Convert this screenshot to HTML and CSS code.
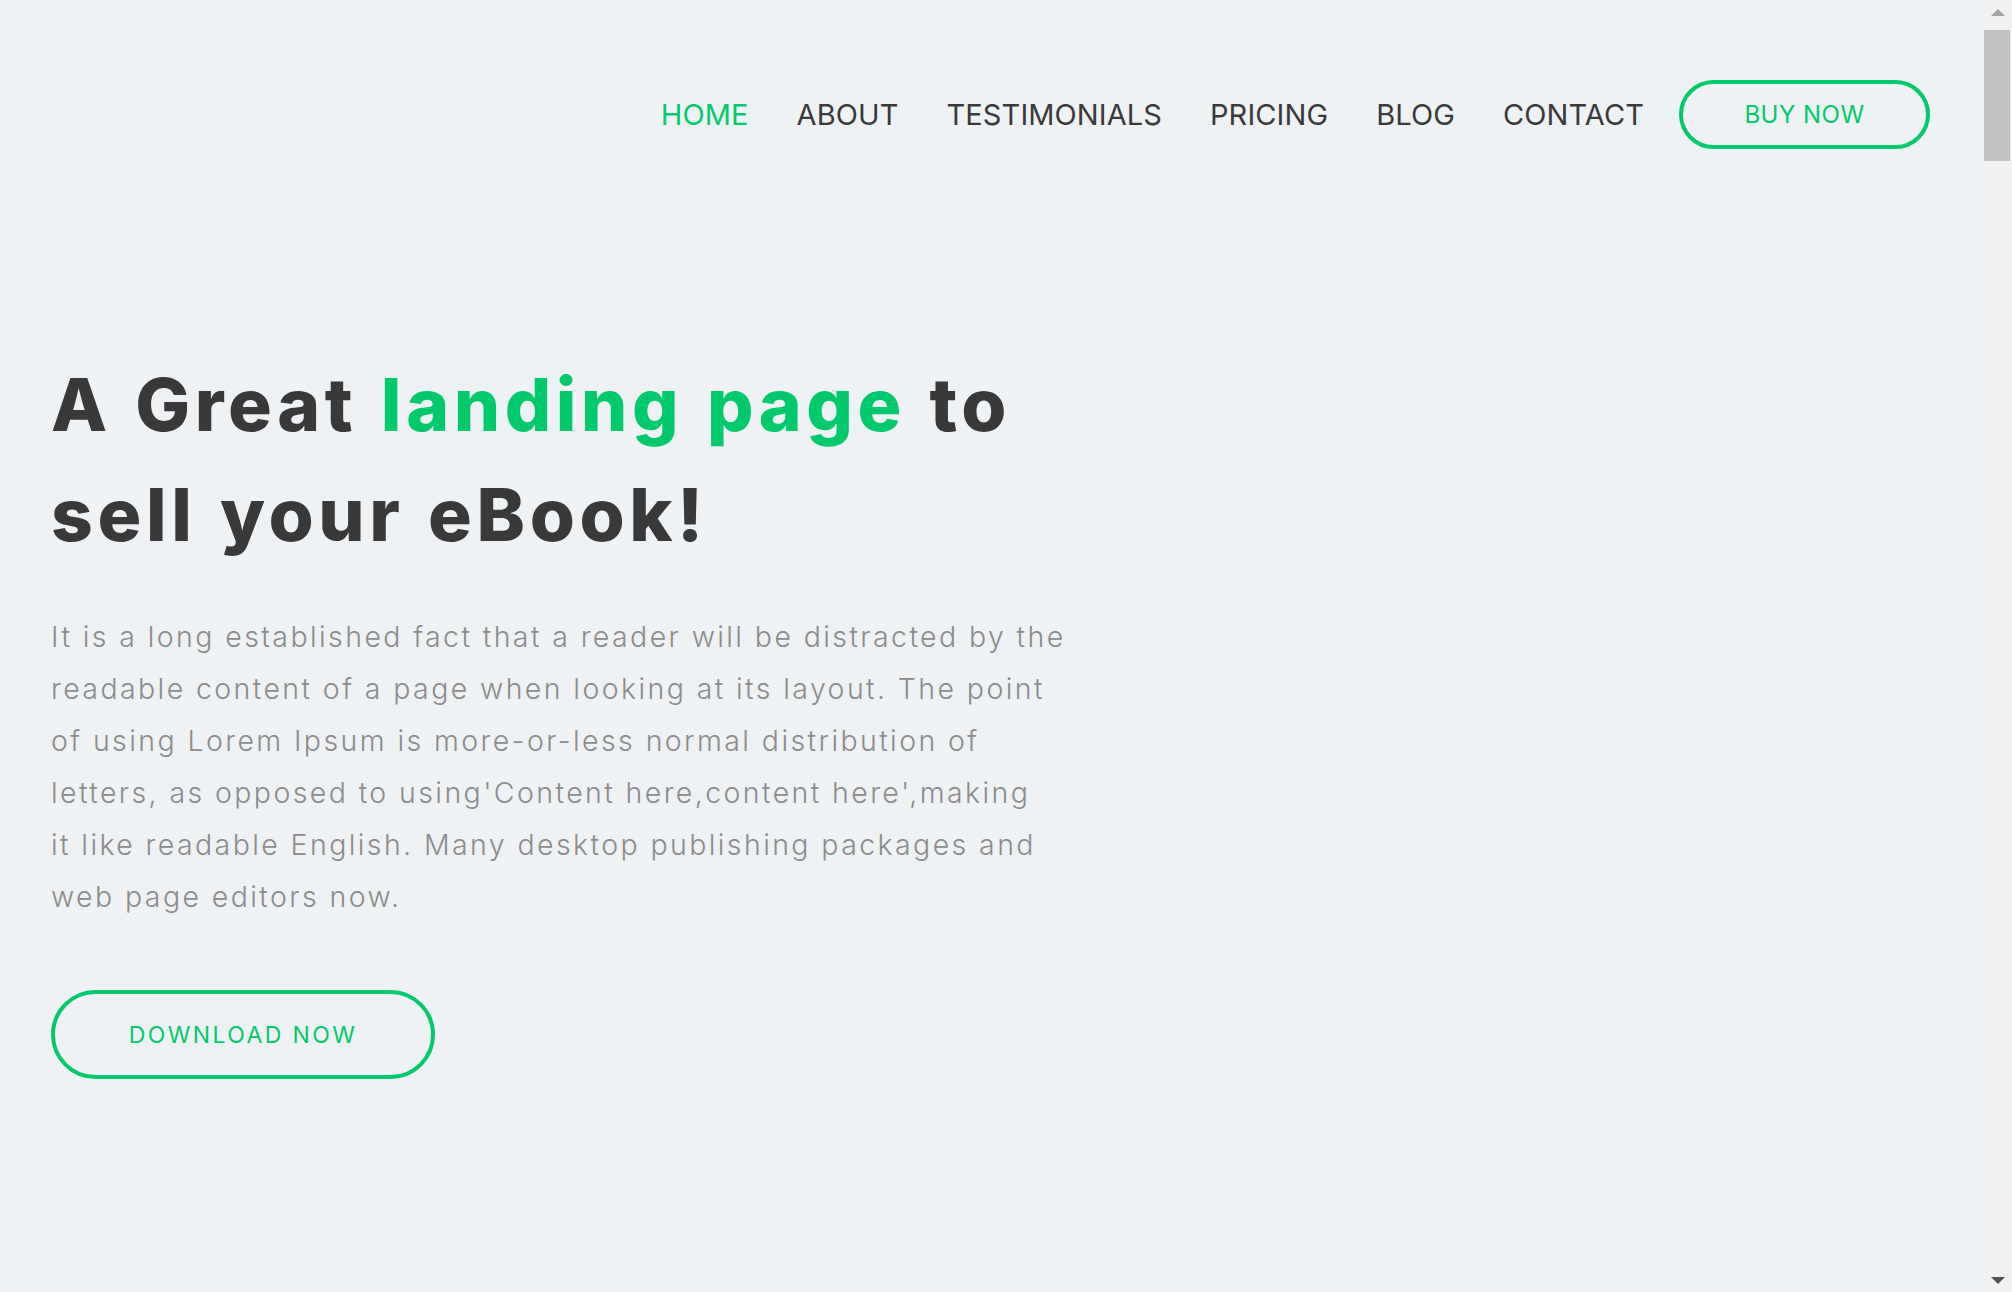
FILE: index.html
```html
<!DOCTYPE html>
<html lang="en">
<head>
<meta charset="utf-8">
<title>eBook Landing</title>
<link rel="stylesheet" href="styles.css">
</head>
<body>
<div class="page">
  <header class="header">
    <nav class="nav">
      <a class="nav-link active" href="#">HOME</a>
      <a class="nav-link" href="#">ABOUT</a>
      <a class="nav-link" href="#">TESTIMONIALS</a>
      <a class="nav-link" href="#">PRICING</a>
      <a class="nav-link" href="#">BLOG</a>
      <a class="nav-link" href="#">CONTACT</a>
      <a class="btn btn-buy" href="#">BUY NOW</a>
    </nav>
  </header>
  <section class="hero">
    <h1 class="hero-title">A Great <span class="accent">landing page</span> to<br>sell your eBook!</h1>
    <p class="hero-text">It is a long established fact that a reader will be distracted by the<br>readable content of a page when looking at its layout. The point<br>of using Lorem Ipsum is more-or-less normal distribution of<br>letters, as opposed to using'Content here,content here',making<br>it like readable English. Many desktop publishing packages and<br>web page editors now.</p>
    <a class="btn btn-download" href="#">DOWNLOAD NOW</a>
  </section>
</div>
<div class="scrollbar">
  <div class="sb-arrow sb-up"></div>
  <div class="sb-track"><div class="sb-thumb"></div></div>
  <div class="sb-arrow sb-down"></div>
</div>
</body>
</html>
```
FILE: styles.css
```css
html, body {
  margin: 0;
  padding: 0;
  height: 100%;
  overflow: hidden;
}
body {
  display: flex;
  background: #eef2f5;
  font-family: Inter, "Open Sans", sans-serif;
  color: #393939;
}
.page {
  flex: 1;
  min-width: 0;
}
.header {
  padding: 80px 53px 0 0;
}
.nav {
  display: flex;
  justify-content: flex-end;
  align-items: center;
  gap: 48px;
}
.nav-link {
  font-size: 29px;
  font-weight: 400;
  letter-spacing: 0.1px;
  color: #3a3a3a;
  text-decoration: none;
}
.nav-link.active {
  color: #00c96b;
}
.btn {
  display: inline-flex;
  align-items: center;
  justify-content: center;
  box-sizing: border-box;
  border: 4px solid #00c96b;
  border-radius: 999px;
  color: #00c96b;
  text-decoration: none;
  font-weight: 400;
}
.btn-buy {
  margin-left: -13px;
  width: 251px;
  height: 69px;
  font-size: 24px;
  letter-spacing: 0.5px;
}
.hero {
  padding: 0 0 0 51px;
}
.hero-title {
  margin: 201px 0 0;
  font-size: 73px;
  line-height: 110px;
  font-weight: 800;
  color: #393939;
  letter-spacing: 4.6px;
  word-spacing: 3px;
}
.accent {
  color: #00c96b;
}
.hero-text {
  margin: 41px 0 0;
  font-size: 28.5px;
  line-height: 52px;
  font-weight: 300;
  letter-spacing: 2.4px;
  color: #8c8c8c;
}
.btn-download {
  margin-top: 67px;
  width: 384px;
  height: 89px;
  font-size: 23px;
  letter-spacing: 2.4px;
}
.scrollbar {
  width: 29px;
  height: 100vh;
  flex: none;
  background: #f1f1f1;
  display: flex;
  flex-direction: column;
}
.sb-arrow {
  height: 29px;
  flex: none;
  display: flex;
  align-items: center;
  justify-content: center;
}
.sb-up::before {
  content: "";
  border-left: 7px solid transparent;
  border-right: 7px solid transparent;
  border-bottom: 7px solid #a3a3a3;
  margin-top: -4px;
}
.sb-down::before {
  content: "";
  border-left: 7px solid transparent;
  border-right: 7px solid transparent;
  border-top: 7px solid #505050;
  margin-top: 6px;
}
.sb-track {
  flex: 1;
  padding: 1px 2px 0 1px;
}
.sb-thumb {
  height: 131px;
  background: #c1c1c1;
}
```
